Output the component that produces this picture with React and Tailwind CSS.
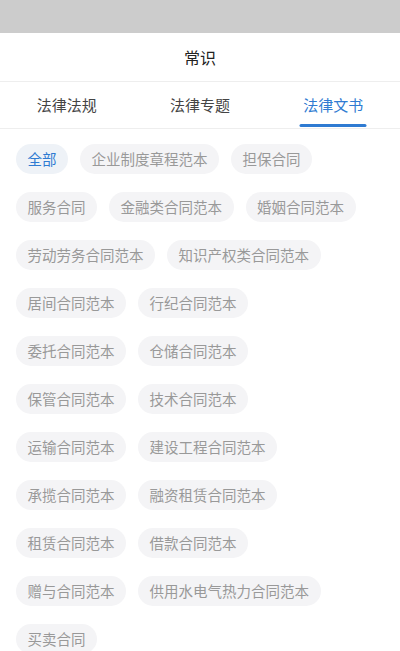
import { useState } from 'react';

const tabs = ['法律法规', '法律专题', '法律文书'];

const tags = [
  '全部',
  '企业制度章程范本',
  '担保合同',
  '服务合同',
  '金融类合同范本',
  '婚姻合同范本',
  '劳动劳务合同范本',
  '知识产权类合同范本',
  '居间合同范本',
  '行纪合同范本',
  '委托合同范本',
  '仓储合同范本',
  '保管合同范本',
  '技术合同范本',
  '运输合同范本',
  '建设工程合同范本',
  '承揽合同范本',
  '融资租赁合同范本',
  '租赁合同范本',
  '借款合同范本',
  '赠与合同范本',
  '供用水电气热力合同范本',
  '买卖合同',
];

export default function App() {
  const [activeTab, setActiveTab] = useState(2);
  const [activeTag, setActiveTag] = useState(0);

  return (
    <div
      className="w-[400px] h-[651px] bg-white overflow-hidden flex flex-col"
      style={{ fontFamily: '"Noto Sans CJK SC", "Noto Sans", sans-serif' }}
    >
      {/* status bar */}
      <div className="h-[33px] bg-[#cccccc] shrink-0"></div>

      {/* title */}
      <div className="h-[49px] flex items-center justify-center border-b border-[#eeeeee] shrink-0">
        <span className="text-[16px] text-[#222222]">常识</span>
      </div>

      {/* tabs */}
      <div className="h-[47px] grid grid-cols-3 border-b border-[#eeeeee] shrink-0">
        {tabs.map((t, i) => (
          <button
            key={t}
            onClick={() => setActiveTab(i)}
            className="relative flex items-center justify-center"
          >
            <span className={`text-[15px] ${activeTab === i ? 'text-[#2f7bd2]' : 'text-[#444444]'}`}>{t}</span>
            {activeTab === i && (
              <span className="absolute bottom-[1px] left-1/2 -translate-x-1/2 w-[67px] h-[3px] rounded-full bg-[#2f7bd2]"></span>
            )}
          </button>
        ))}
      </div>

      {/* tags */}
      <div className="flex flex-wrap gap-x-3 gap-y-[18px] pl-4 pr-[34px] pt-[15px]">
        {tags.map((t, i) => (
          <button
            key={t}
            onClick={() => setActiveTag(i)}
            className={`h-[30px] px-[11.5px] rounded-full text-[14.5px] leading-none flex items-center ${
              activeTag === i ? 'bg-[#eef2f7] text-[#2f7bd2]' : 'bg-[#f4f4f6] text-[#999999]'
            }`}
          >
            {t}
          </button>
        ))}
      </div>
    </div>
  );
}
